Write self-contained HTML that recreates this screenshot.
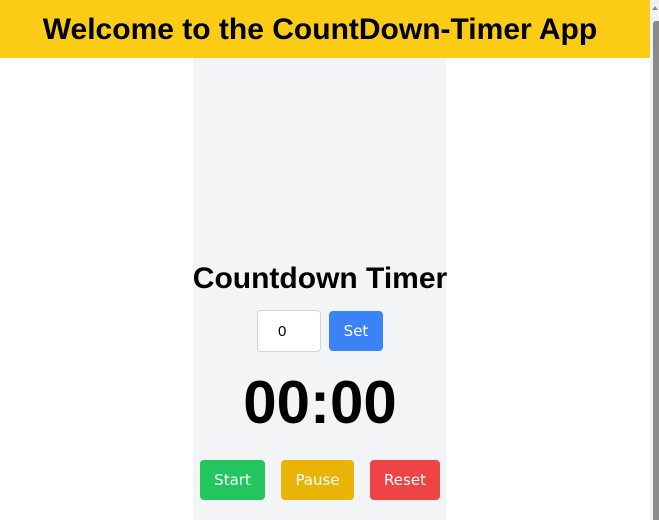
<!DOCTYPE html>
<html><head><style>
body{margin:0;width:659px;height:520px;overflow:hidden;background:#fff;font-family:"Liberation Sans",sans-serif;position:relative}
.hdr{position:absolute;left:0;top:0;width:640px;height:58px;background:#facc15;text-align:center;font-weight:bold;font-size:30px;line-height:60px;color:#000}
.hbg{position:absolute;left:0;top:0;width:650px;height:58px;background:#facc15}
.sb{position:absolute;left:650px;top:0;width:9px;height:520px;background:#f1f1f1}
.th{position:absolute;left:653px;top:21px;width:6px;height:499px;background:#8a8a8a;border-radius:3px 0 0 0}
.ar{position:absolute;left:652px;top:6px;width:0;height:0;border-left:3.5px solid transparent;border-right:3.5px solid transparent;border-bottom:4px solid #8a8a8a}
.panel{position:absolute;left:193px;top:58px;width:253px;height:462px;background:#f3f4f6}
.t{position:absolute;left:0;width:640px;text-align:center;font-weight:bold;color:#000}
.b{position:absolute;color:#fff;font-size:15px;text-align:center;border-radius:4px;font-family:"DejaVu Sans","Liberation Sans",sans-serif}
</style></head><body>
<div class="hbg"></div>
<div class="hdr">Welcome to the CountDown-Timer App</div>
<div class="sb"></div><div class="th"></div><div class="ar"></div>
<div class="panel"></div>
<div class="t" style="top:262px;font-size:30px;left:0;width:640px">Countdown Timer</div>
<div style="position:absolute;left:257px;top:310px;width:64px;height:42px;background:#fff;border:1px solid #d1d5db;border-radius:4px;box-sizing:border-box;font-size:15px;line-height:42px;padding-left:20px">0</div>
<div class="b" style="left:329px;top:311px;width:54px;height:40px;line-height:40px;background:#3b82f6">Set</div>
<div class="t" style="top:368px;font-size:60px;left:0;width:640px">00:00</div>
<div class="b" style="left:200px;top:460px;width:65px;height:40px;line-height:40px;background:#22c55e">Start</div>
<div class="b" style="left:281px;top:460px;width:73px;height:40px;line-height:40px;background:#eab308">Pause</div>
<div class="b" style="left:370px;top:460px;width:70px;height:40px;line-height:40px;background:#ef4444">Reset</div>
</body></html>
